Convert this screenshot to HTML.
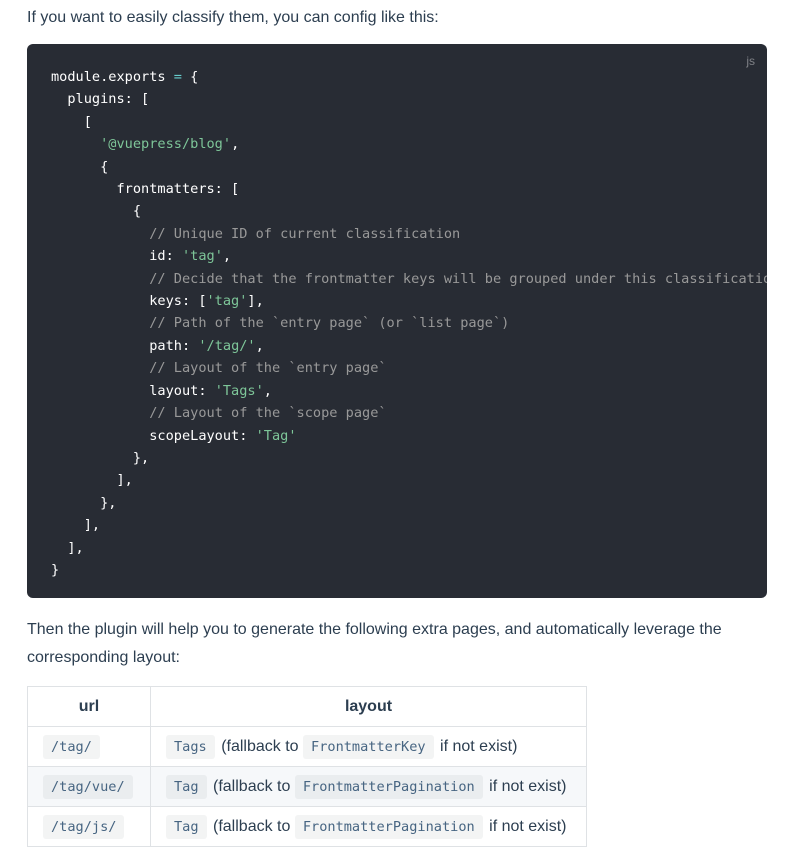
<!DOCTYPE html>
<html><head><meta charset="utf-8"><style>
body{margin:0;background:#fff;font-family:"Liberation Sans",Helvetica,Arial,sans-serif;color:#2c3e50;font-size:16px;width:786px;height:863px;overflow:hidden;position:relative}
p{margin:0;position:absolute;left:27px;line-height:28px;width:740px}
.code{position:absolute;left:27px;top:44px;width:740px;height:554px;background:#282c34;border-radius:6px;overflow:hidden}
.code pre{margin:0;position:absolute;left:24px;top:22px;font-family:"DejaVu Sans Mono","Liberation Mono",monospace;font-size:13.6px;line-height:22.4px;color:#fff;white-space:pre}
.c{color:#999}.s{color:#7ec699}.o{color:#67cdcc}
.lang{position:absolute;right:12px;top:10px;font-size:12px;color:rgba(255,255,255,.4)}
table{position:absolute;left:27px;top:686px;border-collapse:collapse;font-size:16px}
th,td{border:1px solid #dfe2e5;padding:0 15px;height:39px}
th{font-weight:bold;text-align:center}
tr.e td{background:#f6f8fa}
code{font-family:"DejaVu Sans Mono","Liberation Mono",monospace;font-size:13.6px;color:#476582;background:rgba(27,31,35,.05);padding:4px 8px;border-radius:3px;margin:0 2px 0 0}
</style></head><body>
<p style="top:4px">If you want to easily classify them, you can config like this:</p>
<div class="code"><span class="lang">js</span><pre>module.exports <span class="o">=</span> {
  plugins: [
    [
      <span class="s">'@vuepress/blog'</span>,
      {
        frontmatters: [
          {
            <span class="c">// Unique ID of current classification</span>
            id: <span class="s">'tag'</span>,
            <span class="c">// Decide that the frontmatter keys will be grouped under this classification</span>
            keys: [<span class="s">'tag'</span>],
            <span class="c">// Path of the `entry page` (or `list page`)</span>
            path: <span class="s">'/tag/'</span>,
            <span class="c">// Layout of the `entry page`</span>
            layout: <span class="s">'Tags'</span>,
            <span class="c">// Layout of the `scope page`</span>
            scopeLayout: <span class="s">'Tag'</span>
          },
        ],
      },
    ],
  ],
}</pre></div>
<p style="top:616px">Then the plugin will help you to generate the following extra pages, and automatically leverage the corresponding layout:</p>
<table>
<tr><th style="width:92px">url</th><th style="width:405px">layout</th></tr>
<tr><td><code>/tag/</code></td><td><code>Tags</code> (fallback to <code>FrontmatterKey</code> if not exist)</td></tr>
<tr class="e"><td><code>/tag/vue/</code></td><td><code>Tag</code> (fallback to <code>FrontmatterPagination</code> if not exist)</td></tr>
<tr><td><code>/tag/js/</code></td><td><code>Tag</code> (fallback to <code>FrontmatterPagination</code> if not exist)</td></tr>
</table>
</body></html>
